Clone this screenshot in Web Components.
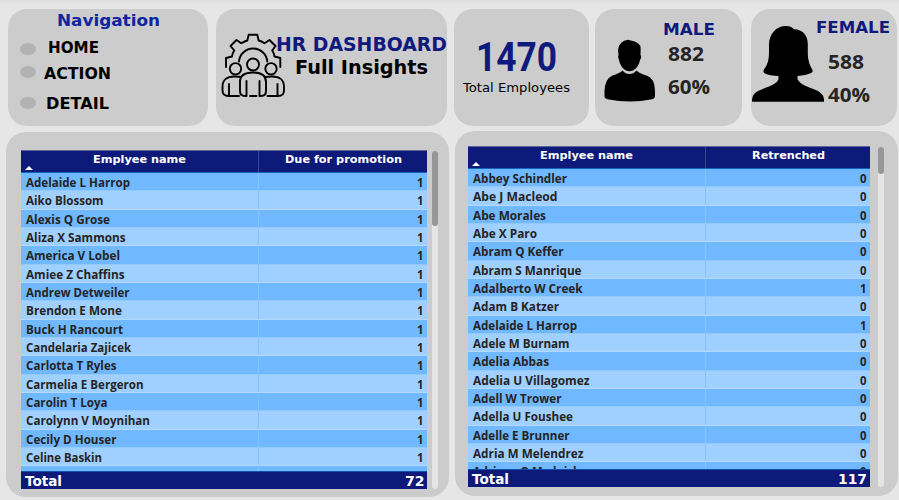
<!DOCTYPE html>
<html lang="en">
<head>
<meta charset="utf-8">
<title>HR Dashboard</title>
<style>
html,body{margin:0;height:100%;overflow:hidden;background:#e6e6e6}
</style>
</head>
<body>
<hr-dashboard></hr-dashboard>
<script>
const define = (name, html, setup) => {
  const tpl = document.createElement('template');
  tpl.innerHTML = html;
  customElements.define(name, class extends HTMLElement {
    constructor() { super(); this.attachShadow({mode: 'open'}).append(tpl.content.cloneNode(true)); }
    connectedCallback() { if (setup) setup(this, this.shadowRoot); }
  });
};

// One line of text set to an exact width; the baseline is the bottom of its box.
define('fit-text', `<style>
:host{display:block;flex:none;color:#000;font-family:Verdana,"DejaVu Sans",sans-serif;font-weight:700}
:host([face=ui]){font-family:"Open Sans","Noto Sans",sans-serif;font-weight:700;color:#252423}
:host([face=din]){font-family:Roboto,sans-serif;font-weight:700}
:host([face=plain]){font-weight:400}
:host([navy]){color:#0e1a7c}
svg{display:block;overflow:visible}text{fill:currentColor}
</style><svg><text x="0" lengthAdjust="spacingAndGlyphs"></text></svg>`, (el, root) => {
  const w = el.getAttribute('w'), s = el.getAttribute('size');
  const svg = root.querySelector('svg'), t = root.querySelector('text');
  svg.setAttribute('width', w); svg.setAttribute('height', s);
  t.setAttribute('y', s); t.setAttribute('textLength', w);
  t.setAttribute('font-size', s); t.textContent = el.getAttribute('text');
});

define('info-card', `<style>
:host{display:flex;box-sizing:border-box;height:117px;border-radius:19px;background:#ccc;flex:none}
</style><slot></slot>`);

define('nav-item', `<style>
:host{display:flex;align-items:flex-start;height:15px}
i{width:16px;height:12px;border-radius:50%;background:#b2b2b2;margin-top:var(--dot,5px);margin-right:var(--gap,12px);flex:none}
</style><i></i><slot></slot>`);

define('team-icon', `<style>:host{display:block;width:64px;height:65px;flex:none}svg{display:block}</style>
<svg width="64" height="65" viewBox="221 33 64 65" fill="none" stroke="#000" stroke-width="1.9" stroke-linejoin="round" stroke-linecap="round">
<path d="M226 67V58L232 56.500Q232.500 53 234.300 50.500L230.500 46L236.500 40L241.300 43.200Q244 41.500 247.300 40.500L248.700 34.700H257.300L258.600 40.500Q261.500 41.300 264.500 43.200L269.500 40L275.500 46L272.200 50.500Q274 53 274.500 56.500L280.300 58V67"/>
<path d="M239 61.500A14.200 14.200 0 0 1 267.300 61.500"/>
<circle cx="253" cy="64.500" r="6"/><circle cx="235.500" cy="68.800" r="5.700"/><circle cx="271" cy="68.800" r="5.700"/>
<path d="M241 77Q239 76.500 235.500 76.500Q222.500 76 222.500 87V90.500Q222.500 96 228.500 96H239M229 84V96M265.500 77Q267.500 76.500 271 76.500Q284 76 284 87V90.500Q284 96 278 96H267.500M277.500 84V96"/>
<path d="M246.500 96H245Q240 96 240 91V82Q240 72.500 253 72.500Q266 72.500 266 82V91Q266 96 261 96H259.500M246.500 81V96M259.500 81V96M250 96H256.500"/>
</svg>`);

define('male-icon', `<style>:host{display:block;width:52px;height:63px;flex:none}svg{display:block}</style>
<svg width="52" height="63" viewBox="604 39 52 63"><path d="M618 50Q618 46 621 43Q624 40 628 39.700L632 40.800Q638 42 640.400 46Q641 50 640.500 55Q642 57 640 60C639 66 634.500 71.300 629.500 71.300C624.500 71.300 620 66 619 60Q617.300 57 618.500 55Z"/><path d="M622.500 70.500Q625.500 74 629.300 74Q633.500 74 636.500 70.500Q639.500 73.500 646.500 75.500Q654.800 78 655 91V96Q655 98.500 652 99.200Q630 103.800 607.500 99.200Q604.500 98.500 604.500 96V91Q605 79 612 75.800Q619.500 73.500 622.500 70.500Z"/></svg>`);

define('female-icon', `<style>:host{display:block;width:74px;height:77px;flex:none}svg{display:block}</style>
<svg width="74" height="77" viewBox="751 26 74 77"><path d="M786 26Q791 26 794 29.300C803 29.300 807.800 36 807.800 44V54Q808 63 812.500 70Q813.500 72 810.500 73.300Q805 76 797.500 76V79C800 85 809 87 818 91Q825 95 824 101.800H752.200Q751 95 758 91C767 86.500 777 85 778.500 79V76Q770 76 764.500 73.300Q762.500 72 764.300 69Q769 63 769 53V45C769 34 776 26 786 26Z"/></svg>`);

define('scroll-track', `<style>
:host{display:block;width:6px;border-radius:3px;background:#e5e5e5;flex:none}
div{height:var(--thumb);border-radius:3px;background:#999795}
</style><div></div>`);

define('data-row', `<style>
:host{display:grid;grid-template-columns:237px 1fr;box-sizing:border-box;height:18.34px;background:#70b8ff;border-bottom:1px solid #94caf8;flex:none}
:host([alt]){background:#a0d0ff;border-bottom-color:#b4d9fb}
div{padding:2px 3.5px 0 4.5px}
div+div{border-left:1px solid #88c2f6;display:flex;justify-content:flex-end}
</style><div><slot name="name"></slot></div><div><slot name="value"></slot></div>`);

define('data-table', `<style>
:host{display:flex;flex-direction:column;box-sizing:border-box;border-top:1px solid #5a6496;flex:none}
header{display:grid;grid-template-columns:237px 1fr;height:22px;box-sizing:border-box;background:#0e1a7a;border-bottom:1px solid #1262c4}
header>div{display:flex;justify-content:center;position:relative;padding-top:1px}
header>div+div{border-left:1px solid #3b4590}
i{position:absolute;left:4px;bottom:2px;border:4px solid transparent;border-top:0;border-bottom:4px solid #fff}
main{height:var(--body);overflow:hidden}
footer{display:flex;justify-content:space-between;height:18px;box-sizing:border-box;background:#0e1a7a;border-top:1px solid #1150ae;padding:0 3px 0 4px}
header fit-text,footer fit-text{color:#fff}
</style><header><div><i></i><fit-text w="93" size="11" text="Emplyee name"></fit-text></div><div></div></header><main></main><footer></footer>`, (el, root) => {
  const rows = el.getAttribute('rows').split('|').map(r => r.split(','));
  const line = (text, w, size, extra = '') => `<fit-text ${extra} w="${w}" size="${size}" text="${text}"></fit-text>`;
  root.querySelectorAll('header>div')[1].innerHTML = line(el.getAttribute('label'), el.getAttribute('label-width'), 11);
  root.querySelector('main').innerHTML = rows.map(([n, w, v], i) =>
    `<data-row ${i % 2 ? 'alt' : ''}>${n ? line(n, w, 12, 'slot="name" face="ui"') + line(v, 6.5, 12, 'slot="value" face="ui"') : ''}</data-row>`).join('');
  root.querySelector('footer').innerHTML = line('Total', 37, 14) + line(el.getAttribute('total'), el.getAttribute('total-width'), 14);
});

define('hr-dashboard', `<style>
:host{display:block;width:899px;height:500px;box-sizing:border-box;padding:9px 0 0;background:linear-gradient(#dedede,#e6e6e6 4px)}
.top{display:flex;padding-left:8px}
.col{display:flex;flex-direction:column}
.bottom{display:flex;align-items:flex-start;margin-top:5px;padding-left:6px}
.panel{display:flex;background:#ccc;border-radius:20px;box-sizing:border-box;flex:none}
</style>
<div class="top">
 <info-card style="width:200px"><div class="col">
  <fit-text w="103" size="16" text="Navigation" style="margin:1px 0 0 48.5px;color:#1224a0"></fit-text>
  <nav-item style="margin:12px 0 0 12px"><fit-text w="51" size="15" text="HOME"></fit-text></nav-item>
  <nav-item style="margin:11px 0 0 12px;--dot:2px;--gap:8px"><fit-text w="67" size="15" text="ACTION"></fit-text></nav-item>
  <nav-item style="margin:15px 0 0 12px;--dot:3px;--gap:10px"><fit-text w="63" size="15" text="DETAIL"></fit-text></nav-item>
 </div></info-card>
 <info-card style="width:231px;margin-left:8px">
  <team-icon style="margin:24px 0 0 5px"></team-icon>
  <div class="col" style="margin-left:-9px;position:relative">
   <fit-text navy w="171" size="19" text="HR DASHBOARD" style="margin-top:23px"></fit-text>
   <fit-text w="133" size="19" text="Full Insights" style="margin:4px 0 0 19px"></fit-text>
  </div>
 </info-card>
 <info-card style="width:135px;margin-left:7px"><div class="col">
  <fit-text navy face="din" w="81" size="40" text="1470" style="margin:22px 0 0 22px"></fit-text>
  <fit-text face="plain" w="107" size="13" text="Total Employees" style="margin:8px 0 0 8.5px"></fit-text>
 </div></info-card>
 <info-card style="width:147px;margin-left:6px">
  <male-icon style="margin:30px 0 0 9px"></male-icon>
  <div class="col" style="margin-left:7px">
   <fit-text navy w="52" size="16" text="MALE" style="margin-top:10px"></fit-text>
   <fit-text face="ui" w="36" size="20" text="882" style="margin:6px 0 0 4.5px"></fit-text>
   <fit-text face="ui" w="42" size="20" text="60%" style="margin:13px 0 0 4.5px"></fit-text>
  </div>
 </info-card>
 <info-card style="width:146px;margin-left:9px">
  <female-icon style="margin:17px 0 0 0"></female-icon>
  <div class="col" style="margin-left:-10px">
   <fit-text navy w="74" size="16" text="FEMALE" style="margin:8px 0 0 .5px"></fit-text>
   <fit-text face="ui" w="36" size="20" text="588" style="margin:16px 0 0 12.500px"></fit-text>
   <fit-text face="ui" w="42" size="20" text="40%" style="margin:13px 0 0 12.500px"></fit-text>
  </div>
 </info-card>
</div>
<div class="bottom">
 <div class="panel" style="width:443px;height:365px;margin-top:1px">
  <data-table style="width:406px;margin:18px 0 0 15px;--body:298px" label="Due for promotion" label-width="117" total="72" total-width="19.5"
   rows="Adelaide L Harrop,104,1|Aiko Blossom,77.5,1|Alexis Q Grose,84,1|Aliza X Sammons,99.5,1|America V Lobel,94,1|Amiee Z Chaffins,98.5,1|Andrew Detweiler,103.5,1|Brendon E Mone,96,1|Buck H Rancourt,97,1|Candelaria Zajicek,105,1|Carlotta T Ryles,90.5,1|Carmelia E Bergeron,117.5,1|Carolin T Loya,81.5,1|Carolynn V Moynihan,124,1|Cecily D Houser,90.5,1|Celine Baskin,76,1|,0,"></data-table>
  <scroll-track style="height:338px;margin:19px 0 0 5px;--thumb:75px"></scroll-track>
 </div>
 <div class="panel" style="width:443px;height:365px;margin-left:6px">
  <data-table style="width:402px;margin:15px 0 0 13px;--body:300px" label="Retrenched" label-width="73" total="117" total-width="29"
   rows="Abbey Schindler,94,0|Abe J Macleod,84.5,0|Abe Morales,73,0|Abe X Paro,64,0|Abram Q Keffer,90.5,0|Abram S Manrique,108.5,0|Adalberto W Creek,109.5,1|Adam B Katzer,86,0|Adelaide L Harrop,104,1|Adele M Burnam,96.5,0|Adelia Abbas,76,0|Adelia U Villagomez,116.5,0|Adell W Trower,88.5,0|Adella U Foushee,100,0|Adelle E Brunner,96.5,0|Adria M Melendrez,110.5,0|Adriana O Mednick,107,0"></data-table>
  <scroll-track style="height:340px;margin:16px 0 0 8px;--thumb:27px"></scroll-track>
 </div>
</div>`);
</script>
</body>
</html>
